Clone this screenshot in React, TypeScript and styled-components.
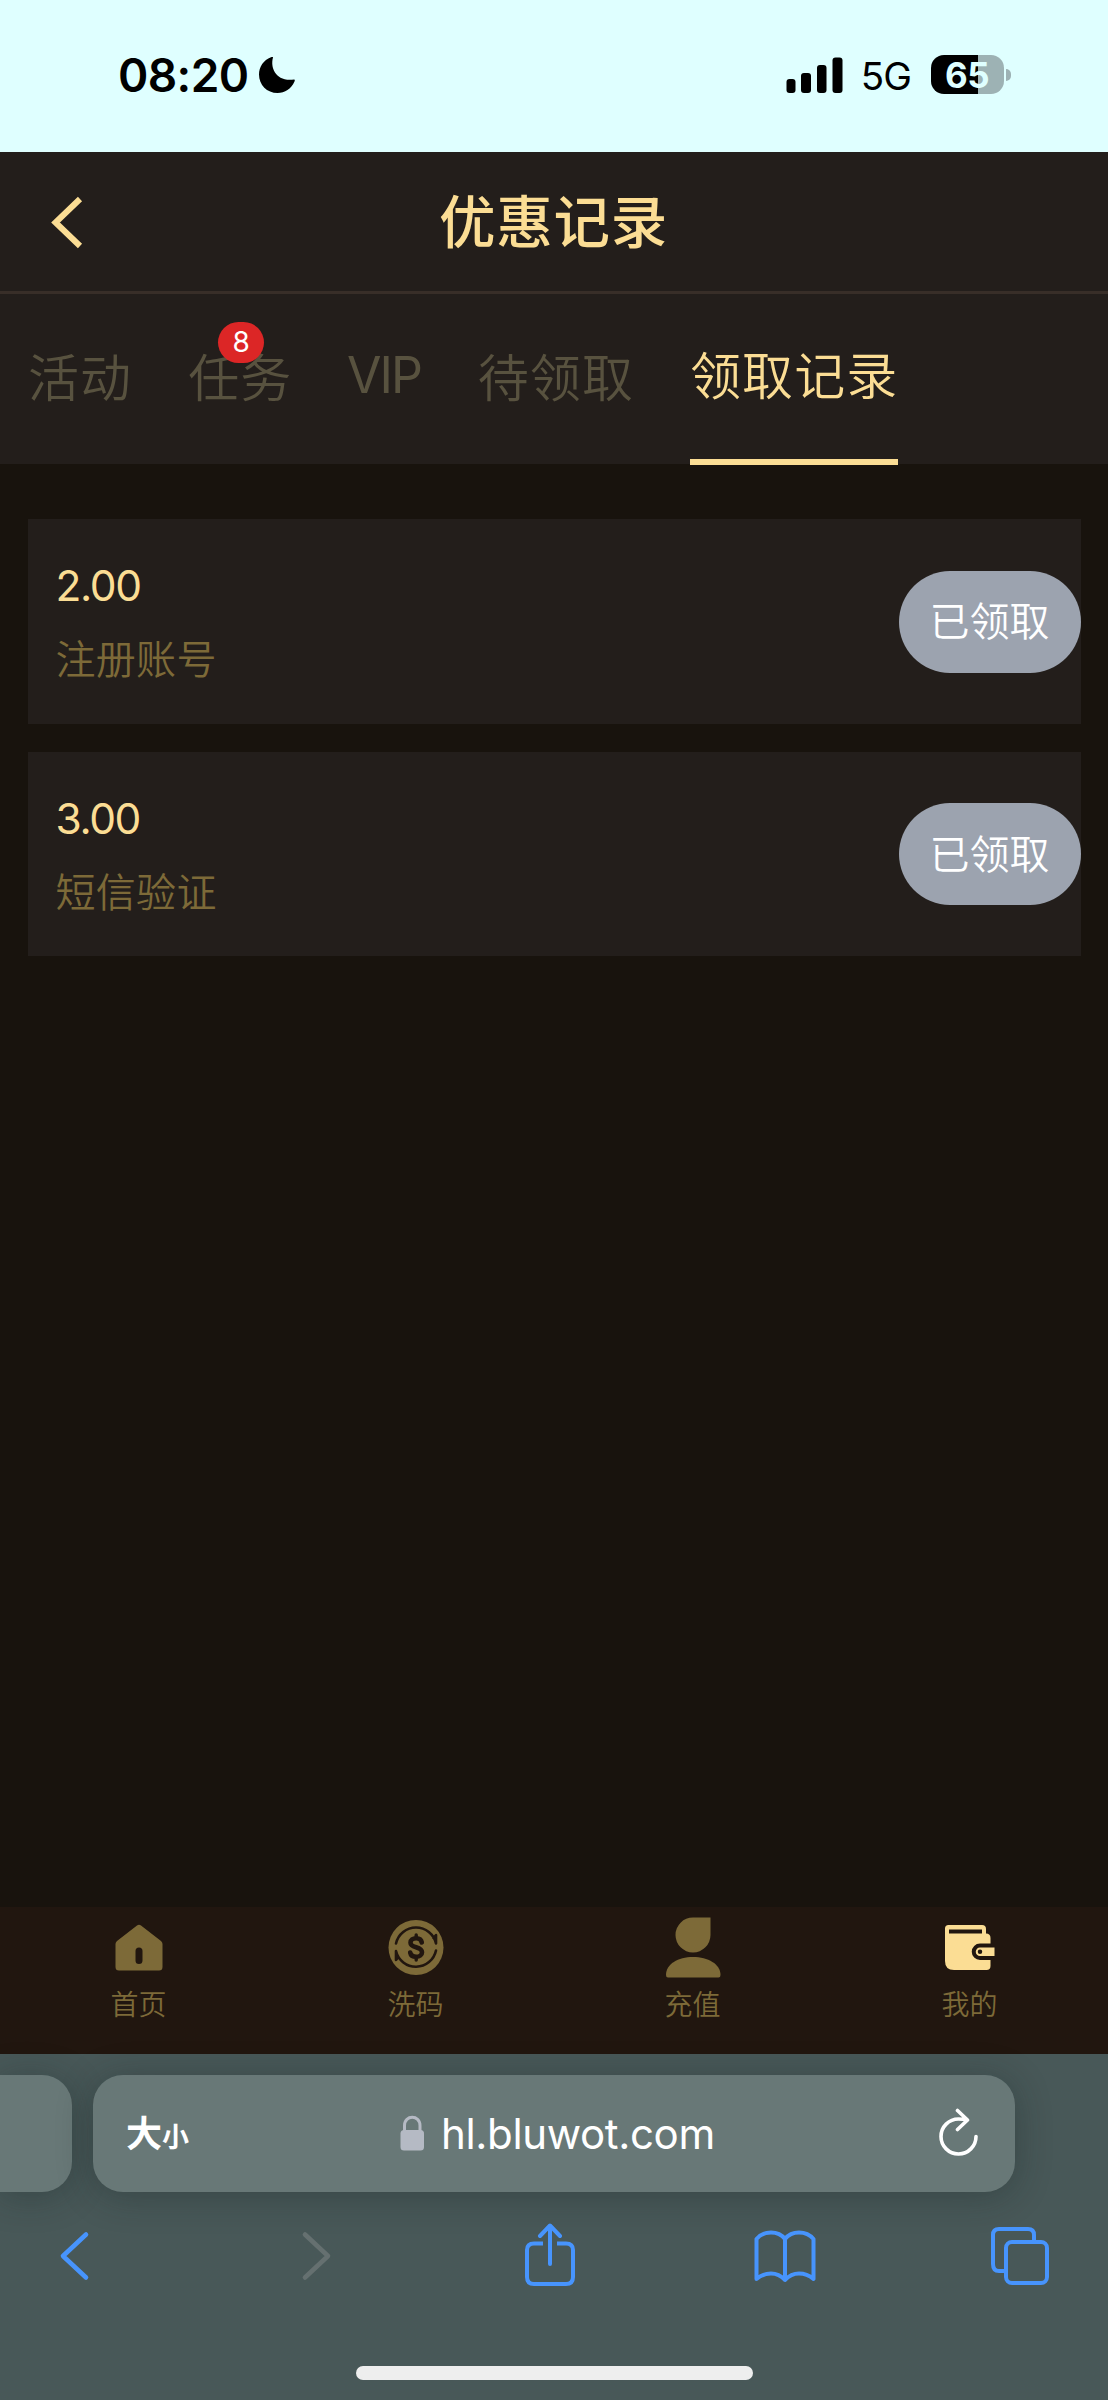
import React from "react";
import styled, { createGlobalStyle } from "styled-components";

const sans = `Inter, "Noto Sans CJK SC", sans-serif`;
const gold = "#fbdd94";
const bronze = "#7d6a38";
const blue = "#4794fd";

const GlobalStyle = createGlobalStyle`
  * { box-sizing: border-box; }
  body { margin: 0; background: #18130d; }
`;

const Screen = styled.div`
  width: 1108px;
  height: 2400px;
  display: flex;
  flex-direction: column;
  overflow: hidden;
  background: #18130d;
  font-family: ${sans};
`;

const StatusBar = styled.header`
  height: 152px;
  flex: none;
  display: flex;
  align-items: center;
  padding: 0 97px 2px 118px;
  background: #dfffff;
  color: #000;
`;

const Clock = styled.span`
  font-size: 46px;
  font-weight: 600;
  line-height: 56px;
  letter-spacing: -0.6px;
  width: 141px;
  white-space: nowrap;
`;

const StatusRight = styled.div`
  margin-left: auto;
  display: flex;
  align-items: center;
`;

const Network = styled.span`
  font-size: 38.5px;
  line-height: 46px;
  letter-spacing: -0.9px;
  margin: 2px 20px 0 18px;
`;

const Battery = styled.div`
  width: 73px;
  height: 39px;
  border-radius: 13px;
  display: flex;
  align-items: center;
  justify-content: center;
  background: linear-gradient(90deg, #000 47px, #9db2b4 47px);
  color: #dfffff;
  font-size: 35px;
  font-weight: 700;
  letter-spacing: -0.5px;
  line-height: 39px;
  padding: 1px 1px 0 0;
  margin-top: -1px;
`;

const BatteryTip = styled.div`
  width: 5px;
  height: 12px;
  margin-left: 2px;
  border-radius: 0 5px 5px 0;
  background: #9db2b4;
`;

const TitleBar = styled.div`
  height: 142px;
  flex: none;
  display: grid;
  grid-template-columns: 200px 1fr 200px;
  align-items: center;
  background: #231e1b;
  border-bottom: 3px solid #382e28;
  svg { margin-left: 50px; }
`;

const Title = styled.h1`
  margin: 0;
  text-align: center;
  color: ${gold};
  font-size: 56.5px;
  line-height: 80px;
  font-weight: 500;
  letter-spacing: 0.8px;
  padding: 2px 1px 0 0;
`;

const Tabs = styled.nav`
  height: 170px;
  flex: none;
  display: flex;
  gap: 56px;
  padding-left: 28px;
  background: #231e1b;
`;

const Tab = styled.div<{ $active?: boolean; $latin?: boolean }>`
  position: relative;
  width: ${(p) => (p.$latin ? "73.3px" : "auto")};
  height: 171px;
  display: flex;
  align-items: center;
  padding-bottom: ${(p) => (p.$active ? 8 : 10)}px;
  border-bottom: ${(p) => (p.$active ? `6px solid ${gold}` : "0")};
  color: ${(p) => (p.$active ? gold : "#58523f")};
  font-size: ${(p) => (p.$latin ? 50 : 51)}px;
  font-weight: ${(p) => (p.$latin ? 400 : 350)};
  letter-spacing: ${(p) => (p.$latin ? -1.9 : 1.1)}px;
  text-indent: ${(p) => (p.$latin ? -1.5 : 0)}px;
  white-space: nowrap;
`;

const Badge = styled.span`
  position: absolute;
  left: 30px;
  top: 28px;
  width: 46px;
  height: 41px;
  border-radius: 20.5px;
  background: #dc2626;
  color: #fff;
  font-size: 28px;
  font-weight: 400;
  line-height: 41px;
  letter-spacing: 0;
  text-align: center;
`;

const Records = styled.main`
  flex: 1;
  display: flex;
  flex-direction: column;
  gap: 28px;
  padding: 55px 27.5px 0;
`;

const Record = styled.article`
  height: 204.5px;
  display: flex;
  align-items: center;
  justify-content: space-between;
  padding: 1px 0 0 28px;
  background: #231e1b;
`;

const RecordText = styled.div`
  display: flex;
  flex-direction: column;
  gap: 14px;
  padding-top: 2.5px;
`;

const Amount = styled.span`
  color: ${gold};
  font-size: 42.5px;
  line-height: 60px;
  letter-spacing: -1.4px;
`;

const Reason = styled.span`
  color: ${bronze};
  font-size: 40px;
  font-weight: 350;
  line-height: 60px;
  letter-spacing: 0.3px;
`;

const Claimed = styled.button`
  width: 182px;
  height: 102px;
  border: 0;
  padding: 1px 0 0;
  border-radius: 51px;
  background: #9ca3af;
  color: #fff;
  font-family: ${sans};
  font-size: 40px;
  font-weight: 350;
  line-height: 60px;
`;

const BottomNav = styled.nav`
  height: 147px;
  flex: none;
  display: grid;
  grid-template-columns: repeat(4, 1fr);
  background: #21160f;
`;

const NavItem = styled.div`
  display: flex;
  flex-direction: column;
  align-items: center;
  padding-top: 8px;
  color: ${bronze};
  font-size: 28px;
  font-weight: 350;
  line-height: 40px;
  svg { margin-bottom: 5.5px; }
`;

const Safari = styled.footer`
  height: 346px;
  flex: none;
  display: flex;
  flex-direction: column;
  background: #485858;
`;

const AddressRow = styled.div`
  display: flex;
  gap: 21px;
  padding-top: 20.5px;
`;

const Card = styled.div`
  height: 117px;
  background: #687877;
  box-shadow: 0 4px 36px rgba(20, 30, 30, 0.32);
`;

const PreviousPage = styled(Card)`
  width: 72px;
  border-radius: 0 30px 30px 0;
`;

const Address = styled(Card)`
  width: 922px;
  border-radius: 30px;
  display: flex;
  align-items: center;
  color: #fff;
`;

const TextSize = styled.div`
  display: flex;
  align-items: baseline;
  width: 306.5px;
  padding: 5px 0 0 33px;
  font-weight: 700;
  font-size: 36px;
  line-height: 50px;
`;

const SmallGlyph = styled.span`
  font-size: 27px;
`;

const Host = styled.span`
  width: 513px;
  padding: 2px 0 0 16.5px;
  font-size: 42px;
  line-height: 56px;
  letter-spacing: -0.35px;
`;

const Toolbar = styled.div`
  height: 128px;
  display: grid;
  grid-template-columns: 241.5px 223px 230px 236.5px 60px;
  align-items: center;
  padding-left: 59px;
`;

const HomeIndicator = styled.div`
  width: 397px;
  height: 14px;
  margin: 46.5px auto 0;
  border-radius: 7px;
  background: #eee;
`;

const MoonIcon = () => (
  <svg width="36" height="36" viewBox="0 0 36 36">
    <path d="M14 0.5C11 11 17 25 35 22.5C36 22.3 36 23.5 35.5 24.5C32 32 26 36 18.500 36C8 36 0 28 0 17.500C0 10 4.500 3 12 0.300C13.200 0 14.200 0 14 0.500Z" />
  </svg>
);

const SignalIcon = () => (
  <svg width="57" height="37" viewBox="0 0 57 37">
    <rect x="0.500" y="22" width="9" height="14" rx="3" />
    <rect x="15" y="16" width="10" height="20" rx="3" />
    <rect x="31" y="8" width="9.500" height="28" rx="3" />
    <rect x="46.500" y="0.500" width="10" height="35.500" rx="3" />
  </svg>
);

const BackIcon = () => (
  <svg width="36" height="54" viewBox="0 0 36 54" fill="none" stroke={gold} strokeWidth="6">
    <path d="M30 4L5.500 27.500L30 51" />
  </svg>
);

const HomeIcon = () => (
  <svg width="64" height="64" viewBox="0 0 64 64">
    <path fill="currentColor" fillRule="evenodd" d="M30 10.500Q32 9 34 10.500L54 26Q55.500 27.500 55.500 29V52Q55.500 55.500 52 55.500H12Q8.500 55.500 8.500 52V29Q8.500 27.500 10 26ZM28.500 36V45.500A3.500 3.500 0 0 0 35.500 45.500V36A3.500 3.500 0 0 0 28.500 36Z" />
  </svg>
);

const CoinIcon = () => (
  <svg width="64" height="64" viewBox="0 0 64 64">
    <circle cx="32" cy="32.500" r="27.500" fill="currentColor" />
    <g fill="none" stroke="#21160f" strokeWidth="2.600" strokeLinecap="round" strokeLinejoin="round">
      <path d="M12 28.500A20.500 20.500 0 0 1 52 28.500V20L49.500 23M52 35.500A20.500 20.500 0 0 1 12 36V45L14.500 42" />
      <path strokeWidth="4.600" d="M37.800 27.500C37.300 24.500 35 23.200 32.200 23.200C29 23.200 26.500 25 26.500 27.700C26.500 33.500 38 31 38 37.200C38 40 35.500 41.800 32.200 41.800C29 41.800 26.700 40.300 26.200 37.500" />
      <path strokeWidth="3.400" d="M32.200 20V23M32.200 42V45" />
    </g>
  </svg>
);

const PersonIcon = () => (
  <svg width="64" height="64" viewBox="0 0 64 64" fill="currentColor">
    <path d="M32 2.500H49.500V20A17.500 17.500 0 1 1 32 2.500Z" />
    <path d="M5 60C5 49 17 42 32 42S59.500 49 59.500 60Q59.500 62.500 57.500 62.500H7Q5 62.500 5 60Z" />
  </svg>
);

const WalletIcon = () => (
  <svg width="64" height="64" viewBox="0 0 64 64">
    <path fill={gold} fillRule="evenodd" d="M10.500 10H44Q48 10 48 14V18.500Q52.500 18.500 52.500 23V28.500H42A8 8 0 0 0 42 45H52.500V51Q52.500 55 48.500 55H16Q7 55 7 46V13.500Q7 10 10.500 10ZM11 14.500V18.500H44V14.500Z" />
    <path fill={gold} fillRule="evenodd" d="M42 32.500H56.500V41H42A4.200 4.200 0 0 1 42 32.500ZM42 34.500A2.200 2.200 0 1 0 42 39A2.200 2.200 0 1 0 42 34.500Z" />
  </svg>
);

const LockIcon = () => (
  <svg width="25" height="36" viewBox="0 0 25 36">
    <rect x="0.500" y="15" width="23.500" height="20.500" rx="3.500" fill="#b5bac4" />
    <path d="M4.500 16V10.500C4.500 -0.500 20 -0.500 20 10.500V16" fill="none" stroke="#b5bac4" strokeWidth="3" />
  </svg>
);

const ReloadIcon = () => (
  <svg width="42" height="50" viewBox="0 0 42 50" fill="none" stroke="#fff" strokeWidth="3.600" strokeLinecap="round" strokeLinejoin="round">
    <path d="M38 28.500A17.500 17.500 0 1 1 20.500 11C23.500 11 26 11.200 29 11.700M19.500 2.500L29.500 12L19.500 21.500" />
  </svg>
);

const Chevron = ({ flip }: { flip?: boolean }) => (
  <svg width="32" height="52" viewBox="0 0 32 52" fill="none" stroke={flip ? "#657070" : blue} strokeWidth="4.600" strokeLinecap="round" strokeLinejoin="round">
    <path d={flip ? "M4 4.500L27 26L4 47.500" : "M27 4.500L4 26L27 47.500"} />
  </svg>
);

const ShareSvg = styled.svg`
  margin-bottom: 2px;
`;

const ShareIcon = () => (
  <ShareSvg width="52" height="64" viewBox="0 0 52 64" fill="none" stroke={blue} strokeWidth="4" strokeLinecap="round" strokeLinejoin="round">
    <path strokeLinecap="butt" d="M19 20.500H10Q3 20.500 3 27V54Q3 61 10 61H42Q49 61 49 54V27Q49 20.500 42 20.500H33" />
    <path d="M26 41V3M16 13L26 2.500L36 13" />
  </ShareSvg>
);

const BookIcon = () => (
  <svg width="62" height="56" viewBox="0 0 62 56" fill="none" stroke={blue} strokeWidth="4" strokeLinecap="round" strokeLinejoin="round">
    <path d="M31 11Q26 4.500 17 4.500T2.500 11V51Q9 45.500 17 45.500T31 52Q37 45.500 45 45.500T59.500 51V11Q54 4.500 45 4.500T31 11V52" />
  </svg>
);

const TabsIcon = () => (
  <svg width="60" height="60" viewBox="0 0 60 60" fill="none" stroke={blue} strokeWidth="4">
    <rect x="16" y="16" width="41" height="41" rx="6" />
    <path d="M44 16V9Q44 3 38 3H9Q3 3 3 9V38Q3 45 9 45H16" />
  </svg>
);

const tabs = [
  { label: "活动" },
  { label: "任务", badge: 8 },
  { label: "VIP", latin: true },
  { label: "待领取" },
  { label: "领取记录", active: true },
];

const records = [
  { amount: "2.00", reason: "注册账号" },
  { amount: "3.00", reason: "短信验证" },
];

export default function App() {
  return (
    <Screen>
      <GlobalStyle />
      <StatusBar>
        <Clock>08:20</Clock>
        <MoonIcon />
        <StatusRight>
          <SignalIcon />
          <Network>5G</Network>
          <Battery>65</Battery>
          <BatteryTip />
        </StatusRight>
      </StatusBar>
      <TitleBar>
        <BackIcon />
        <Title>优惠记录</Title>
      </TitleBar>
      <Tabs>
        {tabs.map((t) => (
          <Tab key={t.label} $active={t.active} $latin={t.latin}>
            {t.label}
            {t.badge && <Badge>{t.badge}</Badge>}
          </Tab>
        ))}
      </Tabs>
      <Records>
        {records.map((r) => (
          <Record key={r.reason}>
            <RecordText>
              <Amount>{r.amount}</Amount>
              <Reason>{r.reason}</Reason>
            </RecordText>
            <Claimed>已领取</Claimed>
          </Record>
        ))}
      </Records>
      <BottomNav>
        <NavItem><HomeIcon />首页</NavItem>
        <NavItem><CoinIcon />洗码</NavItem>
        <NavItem><PersonIcon />充值</NavItem>
        <NavItem><WalletIcon />我的</NavItem>
      </BottomNav>
      <Safari>
        <AddressRow>
          <PreviousPage />
          <Address>
            <TextSize>大<SmallGlyph>小</SmallGlyph></TextSize>
            <LockIcon />
            <Host>hl.bluwot.com</Host>
            <ReloadIcon />
          </Address>
        </AddressRow>
        <Toolbar>
          <Chevron />
          <Chevron flip />
          <ShareIcon />
          <BookIcon />
          <TabsIcon />
        </Toolbar>
        <HomeIndicator />
      </Safari>
    </Screen>
  );
}
